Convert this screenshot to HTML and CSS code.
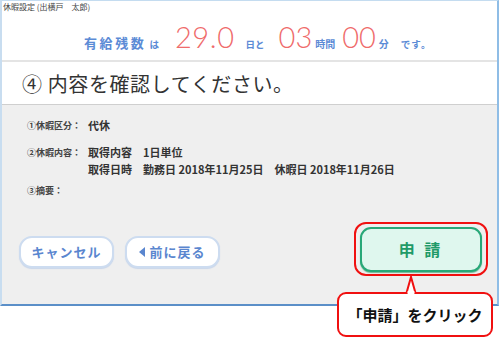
FILE: index.html
```html
<!DOCTYPE html>
<html lang="ja">
<head>
    <meta charset="utf-8">
    <title>休暇設定</title>
    <link rel="stylesheet" href="styles.css">
</head>
<body>
    <div class="window">
        <div class="titlebar">休暇設定 (出横戸　太郎)</div>

        <div class="balance">
            <span class="lbl big">有給残数</span><span class="lbl wa">は</span>
            <span class="num n1">29.0</span><span class="lbl">日と</span>
            <span class="num n2">03</span><span class="lbl u">時間</span>
            <span class="num n3">00</span><span class="lbl u">分</span>
            <span class="lbl tail">です。</span>
        </div>

        <h1 class="heading">④ 内容を確認してください。</h1>

        <div class="content">
            <div class="rows">
                <div class="row">
                    <span class="key">①休暇区分：</span>
                    <div class="val">代休</div>
                </div>
                <div class="row">
                    <span class="key">②休暇内容：</span>
                    <div class="val">
                        <div>取得内容　1日単位</div>
                        <div>取得日時　勤務日 2018年11月25日　休暇日 2018年11月26日</div>
                    </div>
                </div>
                <div class="row last">
                    <span class="key">③摘要：</span>
                </div>
            </div>

            <div class="actions">
                <button class="btn">キャンセル</button>
                <button class="btn"><span class="tri"></span>前に戻る</button>
                <div class="highlight">
                    <button class="btn-apply">申 請</button>
                </div>
            </div>
        </div>
    </div>

    <div class="callout">
        <svg class="tip" width="24" height="20" viewBox="0 0 24 20">
            <path d="M0 17 L7.5 17 L12 1 L16.5 17 L24 17" fill="#fff" stroke="#f01010" stroke-width="2"/>
            <rect x="8.6" y="15" width="6.8" height="5" fill="#fff"/>
        </svg>
        「申請」をクリック
    </div>
</body>
</html>
```

FILE: styles.css
```css
* {
    margin: 0;
    padding: 0;
    box-sizing: border-box;
}

body {
    width: 499px;
    height: 341px;
    position: relative;
    background: #fff;
    font-family: "Noto Sans CJK JP", "Noto Sans", sans-serif;
    overflow: hidden;
}

.window {
    width: 499px;
    height: 306px;
    display: flex;
    flex-direction: column;
    border-top: 1px solid #c4dcf0;
    border-left: 2px solid #c8ddf0;
    border-right: 2px solid #8fbde6;
    border-bottom: 2px solid #5b8fc8;
}

.titlebar {
    height: 13px;
    font-size: 8px;
    line-height: 12px;
    padding-left: 1px;
    color: #444;
}

.balance {
    height: 48px;
    display: flex;
    align-items: baseline;
    padding: 7px 0 0 82px;
    border-bottom: 2px solid #e4e4e4;
}

.lbl {
    color: #5b8bd6;
    font-weight: 700;
    font-size: 9.5px;
}

.lbl.big {
    font-size: 13px;
    letter-spacing: 2.6px;
}

.lbl.wa {
    margin-left: 3px;
}

.lbl.u {
    margin-left: 3px;
    font-size: 10px;
}

.lbl.tail {
    margin-left: 12px;
    letter-spacing: 1px;
}

.num {
    font-family: "Lato", sans-serif;
    font-weight: 300;
    font-size: 29px;
    line-height: 32px;
    color: #ef6b6b;
}

.n1 {
    margin: 0 11px 0 16px;
    letter-spacing: 0.6px;
}

.n2 {
    margin-left: 14px;
}

.n3 {
    margin-left: 7px;
}

.heading {
    height: 43px;
    font-size: 20px;
    font-weight: 400;
    line-height: 44px;
    padding-left: 20px;
    color: #333;
    letter-spacing: 0.6px;
    border-bottom: 1px solid #cfcfcf;
}

.content {
    flex: 1;
    background: #efefef;
    display: flex;
    flex-direction: column;
}

.rows {
    padding: 12px 0 0 25px;
    display: flex;
    flex-direction: column;
    gap: 10px;
}

.row {
    display: flex;
    align-items: flex-start;
}

.row.last {
    margin-top: -6px;
}

.key {
    width: 61px;
    font-size: 9px;
    line-height: 17px;
    font-weight: 700;
    color: #444;
}

.val {
    font-size: 11px;
    line-height: 17px;
    font-weight: 700;
    color: #333;
}

.actions {
    display: flex;
    align-items: center;
    padding: 28px 0 0 17px;
}

.btn {
    width: 95px;
    height: 32px;
    margin-right: 11px;
    border: 2px solid #cddcf0;
    border-radius: 13px;
    background: #fff;
    box-shadow: 0 1px 1px #c9d6ea;
    color: #5a86cf;
    font-family: inherit;
    font-weight: 700;
    font-size: 13px;
    letter-spacing: 1px;
    display: flex;
    align-items: center;
    justify-content: center;
}

.tri {
    width: 0;
    height: 0;
    border-top: 5px solid transparent;
    border-bottom: 5px solid transparent;
    border-right: 6px solid #5a86cf;
    margin-right: 4px;
}

.highlight {
    margin-left: auto;
    margin-right: 9px;
    margin-top: -5px;
    width: 134px;
    height: 54px;
    border: 2px solid #f01010;
    border-radius: 12px;
    display: flex;
    align-items: center;
    justify-content: center;
}

.btn-apply {
    width: 122px;
    height: 45px;
    background: #dff7ee;
    border: 2px solid #28a878;
    border-radius: 11px;
    box-shadow: 0 1px 1px #6fb894;
    color: #1f9a68;
    font-family: inherit;
    font-weight: 700;
    font-size: 16px;
    letter-spacing: 3px;
}

.callout {
    position: absolute;
    left: 337px;
    top: 292px;
    width: 156px;
    height: 45px;
    background: #fff;
    border: 2px solid #f01010;
    border-radius: 9px;
    font-weight: 700;
    font-size: 15px;
    color: #111;
    display: flex;
    align-items: center;
    justify-content: center;
}

.tip {
    position: absolute;
    left: 60px;
    top: -18px;
}
```
